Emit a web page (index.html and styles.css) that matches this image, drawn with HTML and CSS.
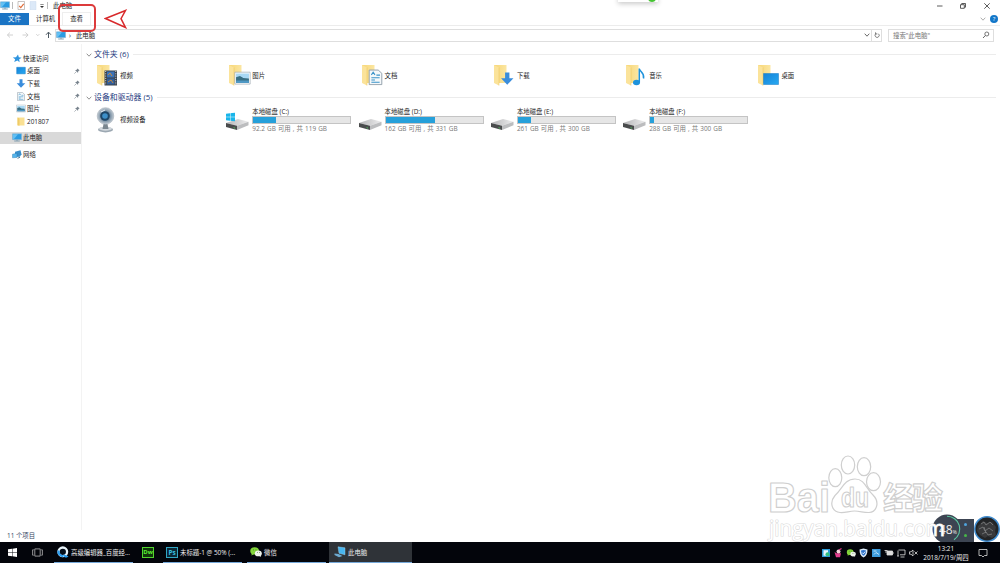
FILE: index.html
```html
<!DOCTYPE html>
<html lang="zh-CN">
<head>
    <meta charset="UTF-8" />
    <title>此电脑</title>
    <link rel="stylesheet" href="styles.css">
</head>
<body>
<svg class="defs">
    <defs>
        <linearGradient id="gold" x1="0" x2="1"><stop offset="0" stop-color="#f7d675"/><stop offset="1" stop-color="#fbe6a2"/></linearGradient>
        <linearGradient id="blue" x1="0" y1="0" x2="1" y2="1"><stop offset="0" stop-color="#1583d8"/><stop offset="1" stop-color="#27a9f2"/></linearGradient>
        <linearGradient id="metal" x1="0" x2="1"><stop offset="0" stop-color="#b5b5b7"/><stop offset="1" stop-color="#ededee"/></linearGradient>
        <radialGradient id="cam"><stop offset="0.2" stop-color="#4c7ea5"/><stop offset="0.6" stop-color="#7d93a6"/><stop offset="1" stop-color="#c3ccd4"/></radialGradient>
    </defs>
    <symbol id="folder" viewBox="0 0 22 24">
        <path d="M1 2h12.500v18H1z" fill="url(#gold)"/>
        <path d="M1 2l5 2.500V22.500L1 20z" fill="#fbe39a"/>
        <path d="M6 4.500V22.500" stroke="#e9c25b" stroke-width=".5"/>
    </symbol>
    <symbol id="pc" viewBox="0 0 10 9">
        <path d="M.5 .8h9v5.800h-9z" fill="#2a9be2" stroke="#82b4d3" stroke-width=".6"/>
        <path d="M1 1.200h5L2 6H1z" fill="#64c0f3"/>
        <path d="M2.200 8h5.600M5 6.600V8" stroke="#7b98ab" stroke-width=".9"/>
    </symbol>
    <symbol id="desktop" viewBox="0 0 10 9"><path d="M.7 1.300h8.600v6.500H.7z" fill="url(#blue)" stroke="#1178c6" stroke-width=".5"/></symbol>
    <symbol id="down" viewBox="0 0 10 9"><path d="M3.500 .3h3v4h2.800L5 8.800 .7 4.300h2.800z" fill="#3a8ddc"/></symbol>
    <symbol id="doc" viewBox="0 0 10 9">
        <path d="M1.500 .5h5l2 1.800v6.300h-7z" fill="#f5f8fa" stroke="#8c9ba6" stroke-width=".5"/>
        <path d="M2.700 3.200l1-1.500 1 1.500M5.500 3.300h2M2.700 4.800h4.600M2.700 6h2M2.700 7.300h4.600" stroke="#3b93c9" stroke-width=".6" fill="none"/>
    </symbol>
    <symbol id="picture" viewBox="0 0 10 9">
        <path d="M.5 1h9v7h-9z" fill="#fff" stroke="#9aa7b0" stroke-width=".4"/>
        <path d="M1.200 1.800h7.600v3H1.200z" fill="#a8d8f4"/>
        <path d="M1.200 4l2.300-.8 2 1.200 3.300 .3v2.500H1.200z" fill="#386f84"/>
        <path d="M1.200 5.900h7.600v1.400H1.200z" fill="#4f98c4"/>
    </symbol>
    <symbol id="star" viewBox="0 0 10 9"><path d="M6 .5l.8 2.700 2.800.5-2.400 1.500.4 3L5.400 6.400 2.200 8l1-2.700L.8 3.400l3.200-.2z" fill="#2e94df"/></symbol>
    <symbol id="network" viewBox="0 0 10 9">
        <path d="M3 1.800l5.500-1.500 1 4-1.600 2.500L3 7z" fill="#3a8fcb"/><path d="M.5 4.200l4.500-1v4.200l-4.500 .4z" fill="#55b5ec" stroke="#2677ae" stroke-width=".4"/><path d="M5.500 8.300l2.500-1" stroke="#577b97"/>
    </symbol>
    <symbol id="pin" viewBox="0 0 6 6"><path d="M3.500 .4l2.100 2.100-.7.300-.9 1 .1 1.200L1 2l1.300 0 .9-.9z" fill="#79848e"/><path d="M2.300 3.700L.4 5.600" stroke="#79848e" stroke-width=".6"/></symbol>
    <symbol id="chevron" viewBox="0 0 6 6"><path d="M.7 1.700L3 4.200 5.300 1.700" fill="none" stroke="currentColor" stroke-width=".8"/></symbol>
    <symbol id="drive" viewBox="0 0 24 24">
        <path d="M0 15L12 11 22.500 13.700 11 17.800z" fill="url(#metal)"/>
        <path d="M0 15l11 2.800v4.200L0 18.900z" fill="#4a4c4d"/>
        <path d="M11 17.800l11.500-4.100v3.600l-11.500 4.700z" fill="#bcbdbf"/>
        <path d="M7.500 19.700l1.600.4" stroke="#4fbf5c" stroke-width=".9"/>
    </symbol>
    <symbol id="win" viewBox="0 0 10 10"><path d="M0 1.500L4.500 .8v4H0zM5 .7L10 0v4.800H5zM0 5.300h4.500v4L0 8.600zM5 5.300h5V10l-5-.7z" fill="currentColor"/></symbol>
    <symbol id="wechat" viewBox="0 0 13 11">
        <ellipse cx="5" cy="4.300" rx="4.700" ry="4" fill="#83d53b"/><path d="M2 7l-.5 2.400L4 8z" fill="#83d53b"/>
        <ellipse cx="9" cy="7" rx="3.800" ry="3.200" fill="#eef3ec"/><path d="M10 9.500l1.800 1.300-.2-2z" fill="#eef3ec"/>
        <path d="M3.300 3.200h.9M6 3.200h.9M7.600 6h.7M9.800 6h.7" stroke="#3d6b2a" stroke-width=".9"/>
    </symbol>
</svg>

<div class="window">
    <div class="titlebar">
        <svg class="ico"><use href="#pc"/></svg>
        <span class="sep"></span>
        <svg class="ico qa" viewBox="0 0 10 9"><path d="M2 .5h6.500v8H2z" fill="#fff" stroke="#a39a97" stroke-width=".6"/><path d="M3.200 4.800L4.800 6.700 7.700 2.800" fill="none" stroke="#e06a35" stroke-width="1.100"/></svg>
        <svg class="ico" viewBox="0 0 10 9"><path d="M2 .5h6v8.300H2z" fill="#dce9f8" stroke="#c3d5ea" stroke-width=".4"/></svg>
        <svg class="caret" viewBox="0 0 6 6"><path d="M1.300 1.500h3.400" stroke="#444" stroke-width=".6"/><path d="M1 3h4L3 5z" fill="#333"/></svg>
        <span class="sep"></span>
        <span class="title">此电脑</span>
        <svg class="winbuttons" viewBox="0 0 60 12" fill="none" stroke="#333" stroke-width=".8">
            <path d="M1 6h5.500"/>
            <path d="M24.500 4.700h3.800v3.600h-3.800zM25.700 4.500V3.500h3.800v3.700h-1"/>
            <path d="M48.300 3.300l5.400 5.400M53.700 3.300l-5.400 5.400"/>
        </svg>
    </div>

    <div class="tabs">
        <span class="tab file">文件</span>
        <span class="tab">计算机</span>
        <span class="tab hover">查看</span>
        <svg class="expand"><use href="#chevron"/></svg>
        <span class="help">?</span>
    </div>

    <div class="address-row">
        <svg class="nav" viewBox="0 0 55 12" fill="none" stroke="#c4c4c4" stroke-width=".8">
            <path d="M13 6H7.500M10 3.500L7.400 6 10 8.500M22.500 6h5.500M25.500 3.500L28.100 6l-2.600 2.500M36.300 5.200l1.500 1.500 1.500-1.500"/>
            <path d="M48.500 9V3.200M46 5.800l2.500-2.700 2.500 2.700" stroke="#4d5963" stroke-width="1"/>
        </svg>
        <div class="address">
            <svg class="ico"><use href="#pc"/></svg>
            <span class="crumb">›</span>
            <span>此电脑</span>
            <svg class="drop"><use href="#chevron"/></svg>
            <svg class="refresh" viewBox="0 0 10 10"><path d="M6.800 2.800A2.600 2.600 0 1 1 3.600 2.700M3.200 1v2.100h2.200" fill="none" stroke="#555" stroke-width=".9"/></svg>
        </div>
        <div class="search">
            <span>搜索"此电脑"</span>
            <svg viewBox="0 0 8 8"><circle cx="4.800" cy="3" r="2" fill="none" stroke="#555" stroke-width=".8"/><path d="M3.400 4.500L1 7" stroke="#555" stroke-width=".9"/></svg>
        </div>
    </div>

    <div class="main">
        <div class="sidebar">
            <div class="item"><svg class="ico"><use href="#star"/></svg>快速访问</div>
            <div class="item sub"><svg class="ico"><use href="#desktop"/></svg>桌面<svg class="pin"><use href="#pin"/></svg></div>
            <div class="item sub"><svg class="ico"><use href="#down"/></svg>下载<svg class="pin"><use href="#pin"/></svg></div>
            <div class="item sub"><svg class="ico"><use href="#doc"/></svg>文档<svg class="pin"><use href="#pin"/></svg></div>
            <div class="item sub"><svg class="ico"><use href="#picture"/></svg>图片<svg class="pin"><use href="#pin"/></svg></div>
            <div class="item sub"><svg class="ico" viewBox="0 0 10 9"><path d="M1.500 .5h7v8h-7z" fill="#fae093"/><path d="M1.500 .5l2 1v7.300l-2-.6z" fill="#f0cb67"/></svg>201807</div>
            <div class="item top selected"><svg class="ico"><use href="#pc"/></svg>此电脑</div>
            <div class="item top"><svg class="ico"><use href="#network"/></svg>网络</div>
        </div>

        <div class="content">
            <div class="group"><svg><use href="#chevron"/></svg><span>文件夹 (6)</span></div>
            <div class="tiles folders">
                <div class="tile">
                    <svg class="big" viewBox="0 0 24 24"><use href="#folder" width="22" height="24"/><path d="M8.500 7.500h12.500v15H8.500z" fill="#394049"/><path d="M11 8.500h7.500v6H11z" fill="#3c73b8"/><path d="M11 15.500h7.500v6H11z" fill="#315f9c"/><path d="M12 12l2-2 2 3M12 19l3-2 2 3" stroke="#c58a3f" fill="none"/><path d="M9.700 8v14M19.800 8v14" stroke="#d4dae0" stroke-dasharray="1 1.300"/></svg>
                    <span>视频</span>
                </div>
                <div class="tile">
                    <svg class="big" viewBox="0 0 24 24"><use href="#folder" width="22" height="24"/><use href="#picture" x="6" y="7.500" width="17" height="15.300"/></svg>
                    <span>图片</span>
                </div>
                <div class="tile">
                    <svg class="big" viewBox="0 0 24 24"><use href="#folder" width="22" height="24"/><use href="#doc" x="5.500" y="6" width="18" height="16.500"/></svg>
                    <span>文档</span>
                </div>
                <div class="tile">
                    <svg class="big" viewBox="0 0 24 24"><use href="#folder" width="22" height="24"/><use href="#down" x="7" y="9" width="14.500" height="13"/></svg>
                    <span>下载</span>
                </div>
                <div class="tile">
                    <svg class="big" viewBox="0 0 24 24"><use href="#folder" width="22" height="24"/><ellipse cx="11.500" cy="19.500" rx="3.500" ry="2.700" fill="#1d92dc"/><path d="M14.300 19.500V5.500c.5 3.500 5.500 4 4.200 10" fill="none" stroke="#1d92dc" stroke-width="1.500"/></svg>
                    <span>音乐</span>
                </div>
                <div class="tile">
                    <svg class="big" viewBox="0 0 24 24"><use href="#folder" width="22" height="24"/><path d="M6.500 10.500h15v11h-15z" fill="url(#blue)" stroke="#1178c6" stroke-width=".5"/></svg>
                    <span>桌面</span>
                </div>
            </div>

            <div class="group devices"><svg><use href="#chevron"/></svg><span>设备和驱动器 (5)</span></div>
            <div class="tiles drives">
                <div class="tile">
                    <svg class="cam" viewBox="0 0 24 28"><ellipse cx="10.500" cy="23.700" rx="7.500" ry="2.700" fill="#9ca8b2"/><ellipse cx="10.500" cy="22.700" rx="6.500" ry="2" fill="#d3d9de"/><path d="M8.500 18h4l1 5h-6z" fill="#7b8790"/><circle cx="10.500" cy="10" r="8.300" fill="url(#cam)" stroke="#a5afb8" stroke-width=".6"/><circle cx="10" cy="10" r="4.800" fill="#1e4667"/><circle cx="10" cy="10" r="2.800" fill="#3d8fc8"/><path d="M6 6l4-2" stroke="#e3edf5"/></svg>
                    <span class="camlabel">视频设备</span>
                </div>
                <div class="tile">
                    <svg class="big" viewBox="0 0 24 24"><use href="#drive"/><use href="#win" x="0" y="4.500" width="9" height="9" color="#19b5ea"/></svg>
                    <div class="disk"><span>本地磁盘 (C:)</span><div class="bar"><i style="width: 23%"></i></div><span class="free">92.2 GB 可用 , 共 119 GB</span></div>
                </div>
                <div class="tile">
                    <svg class="big"><use href="#drive"/></svg>
                    <div class="disk"><span>本地磁盘 (D:)</span><div class="bar"><i style="width: 51%"></i></div><span class="free">162 GB 可用 , 共 331 GB</span></div>
                </div>
                <div class="tile">
                    <svg class="big"><use href="#drive"/></svg>
                    <div class="disk"><span>本地磁盘 (E:)</span><div class="bar"><i style="width: 13%"></i></div><span class="free">261 GB 可用 , 共 300 GB</span></div>
                </div>
                <div class="tile">
                    <svg class="big"><use href="#drive"/></svg>
                    <div class="disk"><span>本地磁盘 (F:)</span><div class="bar"><i style="width: 4%"></i></div><span class="free">288 GB 可用 , 共 300 GB</span></div>
                </div>
            </div>
        </div>
    </div>

    <div class="status">11 个项目</div>
</div>

<div class="taskbar">
    <svg class="start"><use href="#win"/></svg>
    <svg class="taskview" viewBox="0 0 12 10" fill="none" stroke="#ccc" stroke-width=".8"><path d="M3 1h6v8H3zM1.800 2H.6v6h1.200M10.200 2h1.200v6h-1.200"/></svg>
    <div class="task browser">
        <svg viewBox="0 0 12 12"><circle cx="5.800" cy="5.800" r="4.300" fill="#06101c" stroke="#e9f4fb" stroke-width="2.300"/><path d="M1.700 4.500A4.300 4.300 0 0 0 6 10.100" fill="none" stroke="#2b9df0" stroke-width="2.300"/><path d="M6.500 8.500c2 0 3 1.500 5 1.700-1.500 2-4 1.500-5.500-.2z" fill="#2b9df0"/></svg>
        <span>高级编辑器_百度经...</span>
    </div>
    <div class="app dw">Dw</div>
    <div class="task ps"><div class="app">Ps</div><span>未标题-1 @ 50% (...</span></div>
    <div class="task chat"><svg viewBox="0 0 13 11"><use href="#wechat"/></svg><span>微信</span></div>
    <div class="task active"><svg viewBox="0 0 12 12"><path d="M4 .8l7 1v7l-6-1.500z" fill="#48b5ef" stroke="#a7dcf6" stroke-width=".4"/><path d="M.5 7.500l4 .5 4 2-3.500 1.200L.5 9z" fill="#6da9cf"/></svg><span>此电脑</span></div>

    <div class="tray">
        <svg viewBox="0 0 100 12">
            <path d="M1 2h8v8H1z" fill="#2c9bd8"/><path d="M2.500 3.200h4.500v5.500H2.500z" fill="#e8f6ff"/><circle cx="6.500" cy="7.300" r="2" fill="#35c27f"/>
            <path d="M13.500 5l2 1.200h4.500l-1 4h-4z" fill="#e33d8e"/><circle cx="17.500" cy="4.500" r="2" fill="#f5d6dc"/><path d="M18 3l2.500-1.500" stroke="#e33d8e" stroke-width="1.300"/>
            <use href="#wechat" x="25.500" y="2" width="9.500" height="8"/>
            <path d="M38.500 2.500L42.500 1.500l4 1c0 4-1 6.500-4 8-3-1.500-4-4-4-8z" fill="#dcebfa"/><path d="M40 3.500l2.500-.5 2.500.5c0 2.500-.5 4-2.500 5.300C40.500 7.500 40 6 40 3.500z" fill="#2c72cc"/><path d="M41 5.500l1.300 1.300 2-2.300" stroke="#fff" fill="none" stroke-width=".8"/>
            <path d="M51 2h8.500v8H51z" fill="#3d9bdd"/><path d="M52.500 4h3M53 7.500l2-2 3 2" stroke="#bfe4fb" fill="none"/>
            <g fill="none" stroke="#e1e1e1" stroke-width=".8"><path d="M66 4h5.500v4H66z" fill="#ddd"/><path d="M72 5v2M63.500 3.500h3M65 3v3"/><path d="M77.500 3h6.500v4.800h-5M79.500 10h4M77 3.500v5.500M76 9h2"/><path d="M88.500 4.800H90l2-1.800v6L90 7.200h-1.500zM93.500 4.500l3 3M96.500 4.500l-3 3"/></g>
        </svg>
        <div class="clock"><span>13:21</span><span>2018/7/19/周四</span></div>
        <svg class="notice" viewBox="0 0 10 10"><path d="M1 1.500h8v6H6.500L5 9 3.500 7.500H1z" fill="none" stroke="#ddd" stroke-width=".8"/></svg>
    </div>
</div>

<!-- things floating above the desktop -->
<div class="toast"><i></i></div>
<div class="mark"></div>
<svg class="arrow" viewBox="0 0 24 20"><path d="M1.500 9.500L21.500 1.500 17 9.700 21.500 18.500z" fill="none" stroke="#d8292b" stroke-width="1.500"/></svg>

<div class="gadget">
    <div class="panel"><i></i><i class="green"></i></div>
    <div class="gauge">
        <svg viewBox="0 0 30 30"><circle cx="15" cy="15" r="14.500" fill="#3c4452"/><path d="M15 2.200A12.800 12.800 0 0 1 22 25.700" fill="none" stroke="#5cc9a2" stroke-width="1.100"/></svg>
        <span>48<small>%</small></span>
    </div>
    <svg class="avatar" viewBox="0 0 28 28"><circle cx="14" cy="14" r="12.200" fill="#222426" stroke="#3f8bce" stroke-width="1.500"/><path d="M5 11l5-5 4 2 5-1 4 5-1 4 1 4-4 3-4-2-3 2-5-3-3-4z" fill="#38393b"/><path d="M8 9l3-2 2 3 4-3 3 3M6 14l4-2 2 4 4-3 4 3M9 19l4-2 2 3 4-1M11 12l2 6" fill="none" stroke="#88898b" stroke-width=".7"/></svg>
</div>

<svg class="watermark" viewBox="0 0 200 95">
    <g class="outline">
        <text x="4" y="62" font-size="43" textLength="62" lengthAdjust="spacingAndGlyphs">Bai</text>
        <ellipse cx="71.300" cy="27.700" rx="6.500" ry="9"/>
        <ellipse cx="84" cy="15" rx="6.700" ry="9"/>
        <ellipse cx="100" cy="16.700" rx="6.700" ry="9"/>
        <ellipse cx="109.500" cy="31.700" rx="7" ry="9"/>
        <path d="M91 29c10 0 11 10 18 16 7 7 4 17-4 17.500-5 .3-9-1.500-14.500-1.500s-9 2-14.500 1.500c-8-.7-11-10-5-17 7-6 9-16.500 20-16.500z"/>
        <text x="77" y="57" font-size="28" textLength="28" lengthAdjust="spacingAndGlyphs">du</text>
        <text class="cjk" x="119" y="59" font-size="31" textLength="60">经验</text>
    </g>
    <text class="url" x="5" y="85.500" font-size="21" textLength="176" lengthAdjust="spacingAndGlyphs">jingyan.baidu.com</text>
</svg>
</body>
</html>
```

FILE: styles.css
```css
body {
  margin: 0;
  width: 1000px;
  height: 563px;
  display: flex;
  flex-direction: column;
  position: relative;
  overflow: hidden;
  background: #fff;
  font: 6.4px/9px "Open Sans", "Noto Sans CJK SC", sans-serif;
  color: #222;
  white-space: nowrap;
}

svg {
  display: block;
  flex: none;
}

.defs {
  position: absolute;
  width: 0;
  height: 0;
}

.ico {
  width: 10px;
  height: 9px;
}

.window {
  height: 542px;
  display: flex;
  flex-direction: column;
}

.titlebar {
  height: 11px;
  padding-bottom: 1px;
  display: flex;
  align-items: center;
}

.sep {
  width: 1px;
  height: 7px;
  background: #bbb;
  margin: 0 1px 0 2px;
}

.qa {
  margin: 0 2px;
}

.caret {
  width: 6px;
  height: 6px;
  margin: 0 0 0 1px;
}

.title {
  margin-left: 4px;
}

.winbuttons {
  width: 60px;
  height: 12px;
  margin-left: auto;
  margin-right: 4px;
}

.tabs {
  height: 13px;
  display: flex;
  align-items: center;
  border-bottom: 1px solid #ececec;
}

.tab {
  height: 12px;
  line-height: 12px;
  padding: 0 7px;
}

.tab.file {
  width: 29px;
  padding: 0;
  text-align: center;
  color: #fff;
  background: #1b74c4;
}

.tab.hover {
  border: 1px solid #eee;
  border-bottom: 0;
}

.expand {
  width: 6px;
  height: 6px;
  margin-left: auto;
  margin-right: 4px;
  color: #999;
}

.help {
  width: 8px;
  height: 8px;
  margin-right: 2px;
  border-radius: 50%;
  background: #1377c9;
  color: #fff;
  font-size: 6px;
  line-height: 8px;
  text-align: center;
}

.address-row {
  height: 18px;
  display: flex;
  align-items: center;
}

.nav {
  width: 55px;
  height: 12px;
}

.address {
  width: 827px;
  height: 13px;
  box-sizing: border-box;
  border: 1px solid #dedede;
  display: flex;
  align-items: center;
}

.crumb {
  margin: 0 5px 0 3px;
}

.drop {
  width: 6px;
  height: 6px;
  margin-left: auto;
  margin-right: 1px;
  color: #444;
}

.refresh {
  width: 8px;
  height: 9px;
  padding: 1px 0 1px 1px;
  border-left: 1px solid #dedede;
}

.search {
  width: 106px;
  height: 13px;
  box-sizing: border-box;
  margin-left: 6px;
  padding: 0 3px 0 4px;
  border: 1px solid #dedede;
  display: flex;
  align-items: center;
  justify-content: space-between;
  color: #777;
}

.search svg {
  width: 8px;
  height: 8px;
}

.main {
  flex: 1;
  display: flex;
}

.sidebar {
  width: 82px;
  box-sizing: border-box;
  padding-top: 8px;
  border-right: 1px solid #f3f3f3;
}

.item {
  height: 12.6px;
  display: flex;
  align-items: center;
  padding-left: 12px;
}

.item .ico {
  margin-right: 1px;
}

.item.sub {
  padding-left: 16px;
}

.item.top {
  margin-top: 4px;
}

.selected {
  background: #d9d9d9;
}

.pin {
  width: 6px;
  height: 6px;
  margin-left: auto;
  margin-right: 1px;
}

.content {
  flex: 1;
  padding: 5px 4px 0 4px;
}

.group {
  height: 11px;
  display: flex;
  align-items: center;
  font-size: 7.9px;
  color: #24397e;
}

.group svg {
  width: 6px;
  height: 6px;
  margin-right: 2px;
  color: #777;
}

.group::after {
  content: "";
  flex: 1;
  height: 1px;
  margin-left: 4px;
  background: #ececec;
}

.devices {
  margin-top: 3px;
}

.tiles {
  display: flex;
  padding-left: 9px;
}

.folders {
  height: 29px;
  padding-top: 1px;
  box-sizing: border-box;
}

.tile {
  width: 132.3px;
  display: flex;
  align-items: center;
}

.drives {
  height: 30px;
  padding-top: 2px;
}

.big {
  width: 24px;
  height: 24px;
  margin-right: 1px;
}

.folders .big {
  position: relative;
  left: 1px;
}

.drives .big {
  margin-left: -1px;
  margin-right: 2px;
}

.cam {
  width: 24px;
  height: 28px;
  margin-right: 1px;
}

.camlabel {
  margin-bottom: 2px;
}

.disk {
  display: flex;
  flex-direction: column;
}

.bar {
  width: 99px;
  height: 8px;
  box-sizing: border-box;
  border: 1px solid #c4c4c4;
  background: #e6e6e6;
}

.bar i {
  display: block;
  height: 100%;
  background: #26a0da;
}

.free {
  color: #777;
  word-spacing: .45px;
}

.status {
  height: 12px;
  line-height: 12px;
  padding-left: 7px;
  color: #37475f;
}

.taskbar {
  height: 21px;
  display: flex;
  align-items: center;
  background: #03050b;
  color: #eee;
}

.start {
  width: 9px;
  height: 9px;
  margin-left: 8px;
  color: #fff;
}

.taskview {
  width: 11px;
  height: 9px;
  margin: 0 11px 0 15px;
}

.task {
  height: 21px;
  box-sizing: border-box;
  display: flex;
  align-items: center;
  padding-left: 3px;
  border-bottom: 1px solid #76a9da;
}

.task svg {
  width: 12px;
  height: 12px;
  margin-right: 2px;
}

.browser {
  width: 79px;
}

.app {
  width: 10px;
  height: 9px;
  border: 1px solid #32a7c4;
  background: #0b2836;
  color: #37c1e2;
  font-weight: bold;
  text-align: center;
}

.dw {
  margin: 0 9px;
  border-color: #52d52e;
  background: #10350b;
  color: #5df233;
  font-size: 6px;
}

.ps {
  width: 79px;
}

.ps .app {
  margin-right: 2px;
}

.chat {
  width: 79px;
  margin-left: 5px;
}

.active {
  width: 83px;
  margin-left: 3px;
  padding-left: 5px;
  background: #2f3338;
}

.tray {
  margin-left: auto;
  display: flex;
  align-items: center;
}

.tray svg {
  width: 100px;
  height: 12px;
}

.clock {
  width: 50px;
  display: flex;
  flex-direction: column;
  align-items: center;
}

.tray .notice {
  width: 10px;
  height: 10px;
  margin: 0 12px 0 7px;
}

.toast {
  position: absolute;
  left: 618px;
  top: -6px;
  width: 40px;
  height: 8px;
  background: #fff;
  box-shadow: 0 2px 5px #ccc;
}

.toast i {
  position: absolute;
  right: 2px;
  top: 0;
  width: 8px;
  height: 8px;
  border-radius: 50%;
  background: #45c432;
}

.mark {
  position: absolute;
  left: 58px;
  top: 4px;
  width: 34px;
  height: 24px;
  border: 2px solid #dc3a3b;
  border-radius: 5px;
}

.arrow {
  position: absolute;
  left: 104px;
  top: 9px;
  width: 24px;
  height: 20px;
}

.gadget {
  position: absolute;
  left: 931px;
  top: 514px;
  width: 69px;
  height: 28px;
  overflow: hidden;
}

.panel {
  position: absolute;
  left: 15px;
  top: 5px;
  width: 28px;
  height: 24px;
  background: #3c4452;
}

.panel i {
  position: absolute;
  left: 18px;
  top: 4px;
  width: 3px;
  height: 3px;
  border-radius: 50%;
  background: #4fa3dd;
}

.panel .green {
  top: 15px;
  background: #46b648;
}

.gauge {
  position: absolute;
  left: 1px;
  top: 0;
  width: 30px;
  height: 30px;
}

.gauge span {
  position: absolute;
  left: 7px;
  top: 9px;
  font-size: 12px;
  line-height: 14px;
  color: #eee;
}

.gauge small {
  font-size: 5px;
}

.avatar {
  position: absolute;
  left: 42px;
  top: 1px;
  width: 28px;
  height: 28px;
}

.watermark {
  position: absolute;
  left: 764px;
  top: 450px;
  width: 200px;
  height: 95px;
  font-family: "Liberation Sans", sans-serif;
  font-weight: bold;
}

.outline {
  fill: #fff;
  stroke: #cfcfcf;
  stroke-width: 1.2;
  stroke-linejoin: round;
}

.cjk {
  font-family: "Noto Sans CJK SC", sans-serif;
}

.url {
  fill: #fff;
  stroke: #dadada;
  stroke-width: 1.2;
  stroke-linejoin: round;
  paint-order: stroke;
  font-family: "Open Sans", sans-serif;
  font-weight: 500;
}
```
